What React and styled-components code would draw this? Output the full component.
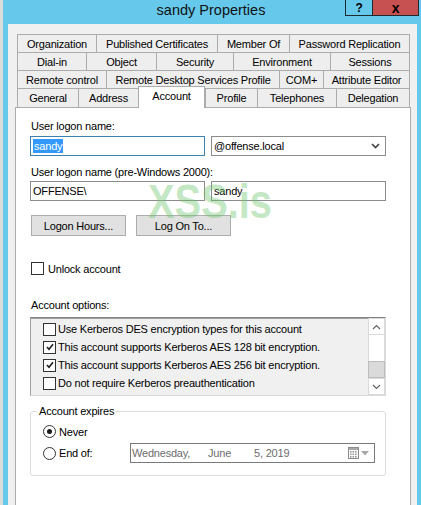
import React from 'react';
import styled, { createGlobalStyle } from 'styled-components';

const GlobalStyle = createGlobalStyle`
  html, body {
    margin: 0;
    padding: 0;
  }
  body {
    background: #dcdcdc;
    font-family: "Liberation Sans", Arial, sans-serif;
    font-size: 11px;
    letter-spacing: -0.2px;
    color: #000;
    overflow: hidden;
  }
`

const Window = styled.div`
  margin-left: 3px;
  width: 418px;
  height: 505px;
  background: #66c9ec;
  display: flex;
  flex-direction: column;
  overflow: hidden;
`
const TitleBar = styled.div`
  flex: none;
  height: 24px;
  display: grid;
  grid-template-columns: 1fr auto 1fr;
  padding-right: 2px;
`
const Title = styled.div`
  grid-column: 2;
  font-size: 14.5px;
  letter-spacing: 0;
  line-height: 20px;
  color: #111;
`
const Caption = styled.div`
  grid-column: 3;
  justify-self: end;
  align-self: start;
  display: flex;
`
const CaptionButton = styled.div`
  width: ${p => p.$w}px;
  height: 16px;
  box-sizing: border-box;
  background: ${p => p.$bg};
  border: 1px solid #1f2a30;
  border-top: none;
  ${p => p.$noLeft && 'border-left: none;'}
  display: flex;
  align-items: center;
  justify-content: center;
  font-weight: bold;
  font-size: ${p => p.$fs || 12}px;
  line-height: 14px;
  color: #000;
`
const Body = styled.div`
  flex: 1;
  margin: 0 4px 0 5px;
  background: #f0f0f0;
  padding: 10px 6px 0 7px;
  display: flex;
  flex-direction: column;
  min-height: 0;
`
const TabStrip = styled.div`
  margin-left: 2px;
  width: 393px;
  display: flex;
  flex-direction: column;
`
const TabRow = styled.div`
  display: flex;
  height: ${p => p.$h}px;
`
const Tab = styled.div`
  flex: none;
  width: ${p => p.$w}px;
  box-sizing: border-box;
  border-top: 1px solid #acacac;
  border-left: 1px solid #acacac;
  background: #eeeeee;
  display: flex;
  align-items: center;
  justify-content: center;
  white-space: nowrap;
  &:last-child {
    border-right: 1px solid #acacac;
  }
  ${p => p.$active && `
    position: relative;
    z-index: 1;
    align-self: flex-start;
    height: 22px;
    margin-top: -2px;
    background: #fff;
    border-right: 1px solid #acacac;
    padding-bottom: 3px;
  `}
`
const Panel = styled.div`
  flex: 1;
  position: relative;
  background: #fff;
  border: 1px solid #acacac;
  border-bottom: none;
  padding: 11px 0 0 14px;
  display: flex;
  flex-direction: column;
  align-items: flex-start;
`
const Label = styled.div`
  height: 15px;
  line-height: 15px;
  margin-left: 1px;
  margin-top: ${p => p.$mt || 0}px;
  margin-bottom: ${p => p.$mb || 0}px;
  white-space: nowrap;
`
const FieldRow = styled.div`
  display: flex;
  gap: 6px;
`
const TextBox = styled.div`
  width: 175px;
  height: 20px;
  box-sizing: border-box;
  border: 1px solid ${p => (p.$focused ? '#3c7fb1' : '#8c8c8c')};
  background: #fff;
  display: flex;
  align-items: center;
  justify-content: space-between;
  padding: 0 5px 0 2px;
  white-space: nowrap;
`
const Selected = styled.span`
  background: #3399ff;
  color: #fff;
  line-height: 14px;
  padding: 0 1px;
`
const ButtonRow = styled.div`
  display: flex;
  gap: 10px;
  margin-top: 14px;
  margin-left: 1px;
`
const Button = styled.div`
  width: 95px;
  height: 21px;
  box-sizing: border-box;
  background: #e1e1e1;
  border: 1px solid #adadad;
  display: flex;
  align-items: center;
  justify-content: center;
`
const CheckRow = styled.div`
  display: flex;
  align-items: center;
  gap: ${p => p.$gap || 3}px;
  height: ${p => p.$h || 15}px;
  margin-top: ${p => p.$mt || 0}px;
  padding-left: ${p => p.$pl || 0}px;
  white-space: nowrap;
`
const Box = styled.span`
  flex: none;
  width: 13px;
  height: 13px;
  box-sizing: border-box;
  border: 1px solid #333;
  background: #fff;
  display: flex;
  align-items: center;
  justify-content: center;
`
const Radio = styled(Box)`
  border-radius: 50%;
  &::after {
    content: '';
    display: ${p => (p.$on ? 'block' : 'none')};
    width: 5px;
    height: 5px;
    border-radius: 50%;
    background: #1b1b1b;
  }
`
const ListBox = styled.div`
  margin-top: 4px;
  width: 356px;
  height: 79px;
  box-sizing: border-box;
  border: 1px solid #dadada;
  border-top-color: #828282;
  border-left-color: #a0a0a0;
  box-shadow: inset 0 1px 0 #a0a0a0;
  background: #f0f0f0;
  display: flex;
`
const Items = styled.div`
  flex: 1;
  padding: 2px 0 0 12px;
`
const ScrollBar = styled.div`
  flex: none;
  width: 17px;
  display: flex;
  flex-direction: column;
  background: #fff;
`
const ScrollButton = styled.div`
  height: 17px;
  box-sizing: border-box;
  border: 1px solid #dadada;
  background: #fff;
  display: flex;
  align-items: center;
  justify-content: center;
`
const Track = styled.div`
  flex: 1;
  border-left: 1px solid #dadada;
  border-right: 1px solid #dadada;
`
const Thumb = styled.div`
  height: 17px;
  box-sizing: border-box;
  background: #dadada;
  border: 1px solid #bdbdbd;
`
const Group = styled.fieldset`
  margin: 8px 0 0;
  padding: 5px 0 12px;
  width: 356px;
  box-sizing: border-box;
  border: 1px solid #dcdcdc;
  border-radius: 3px;
  min-width: 0;
`
const Legend = styled.legend`
  margin-left: 6px;
  padding: 0 2px;
  line-height: 15px;
`
const EndLabel = styled.span`
  width: 68px;
`
const DateBox = styled.div`
  width: 245px;
  height: 20px;
  box-sizing: border-box;
  border: 1px solid #7a7a7a;
  background: #fff;
  color: #6d6d6d;
  display: flex;
  align-items: center;
  padding: 0 5px 0 1px;
`
const DatePart = styled.span`
  width: ${p => p.$w}px;
`
const DateIcons = styled.span`
  margin-left: auto;
  display: flex;
  align-items: center;
  gap: 2px;
`
const Watermark = styled.div`
  position: absolute;
  left: 132px;
  top: 70px;
  font-size: 48px;
  line-height: 1;
  font-weight: bold;
  letter-spacing: 0;
  color: rgba(110, 196, 110, 0.42);
  transform: scaleX(0.83);
  transform-origin: left top;
  pointer-events: none;
`

const Check = () => (
  <svg width="8" height="8" viewBox="0 0 8 8">
    <path d="M1 4 L3 6.3 L7 1.2" fill="none" stroke="#1e1e1e" strokeWidth="1.6" />
  </svg>
)

const Chevron = ({ up, color = '#606060', w = 1.1 }) => (
  <svg width="9" height="6" viewBox="0 0 9 6">
    <polyline
      points={up ? '1,5 4.5,1.5 8,5' : '1,1 4.5,4.5 8,1'}
      fill="none"
      stroke={color}
      strokeWidth={w}
    />
  </svg>
)

const CalendarIcon = () => (
  <svg width="11" height="12" viewBox="0 0 11 12">
    <rect x="0.5" y="0.5" width="10" height="11" fill="#fff" stroke="#8a8a8a" />
    <rect x="1" y="1" width="9" height="2" fill="#a8a8a8" />
    {[4, 6.5, 9].map(y =>
      [2, 4.5, 7].map(x => (
        <rect key={`${x}-${y}`} x={x} y={y} width="1.6" height="1.6" fill="#9a9a9a" />
      ))
    )}
  </svg>
)

const tabRows = [
  { h: 18, tabs: [['Organization', 79], ['Published Certificates', 121], ['Member Of', 72], ['Password Replication', 121]] },
  { h: 18, tabs: [['Dial-in', 69], ['Object', 70], ['Security', 77], ['Environment', 97], ['Sessions', 80]] },
  { h: 18, tabs: [['Remote control', 89], ['Remote Desktop Services Profile', 173], ['COM+', 44], ['Attribute Editor', 87]] },
  { h: 19, tabs: [['General', 61], ['Address', 60], ['Account', 67], ['Profile', 52], ['Telephones', 79], ['Delegation', 74]] },
]

const options = [
  ['Use Kerberos DES encryption types for this account', false],
  ['This account supports Kerberos AES 128 bit encryption.', true],
  ['This account supports Kerberos AES 256 bit encryption.', true],
  ['Do not require Kerberos preauthentication', false],
]

export default function App() {
  return (
    <>
      <GlobalStyle />
      <Window>
        <TitleBar>
          <Title>sandy Properties</Title>
          <Caption>
            <CaptionButton $w={28} $bg="transparent">?</CaptionButton>
            <CaptionButton $w={46} $bg="#c75050" $fs={14} $noLeft>x</CaptionButton>
          </Caption>
        </TitleBar>
        <Body>
          <TabStrip>
            {tabRows.map((row, i) => (
              <TabRow key={i} $h={row.h}>
                {row.tabs.map(([name, w]) => (
                  <Tab key={name} $w={w} $active={name === 'Account'}>{name}</Tab>
                ))}
              </TabRow>
            ))}
          </TabStrip>
          <Panel>
            <Label $mb={2}>User logon name:</Label>
            <FieldRow>
              <TextBox $focused><Selected>sandy</Selected></TextBox>
              <TextBox>
                <span>@offense.local</span>
                <Chevron color="#444" w={1.7} />
              </TextBox>
            </FieldRow>
            <Label $mt={9} $mb={1}>User logon name (pre-Windows 2000):</Label>
            <FieldRow>
              <TextBox>OFFENSE\</TextBox>
              <TextBox>sandy</TextBox>
            </FieldRow>
            <ButtonRow>
              <Button>Logon Hours...</Button>
              <Button>Log On To...</Button>
            </ButtonRow>
            <CheckRow $mt={25} $gap={4} $pl={1}>
              <Box />
              <span>Unlock account</span>
            </CheckRow>
            <Label $mt={22}>Account options:</Label>
            <ListBox>
              <Items>
                {options.map(([text, on]) => (
                  <CheckRow key={text} $h={18} $gap={2}>
                    <Box>{on && <Check />}</Box>
                    <span>{text}</span>
                  </CheckRow>
                ))}
              </Items>
              <ScrollBar>
                <ScrollButton><Chevron up /></ScrollButton>
                <Track />
                <Thumb />
                <ScrollButton><Chevron /></ScrollButton>
              </ScrollBar>
            </ListBox>
            <Group>
              <Legend>Account expires</Legend>
              <CheckRow $pl={12}>
                <Radio $on />
                <span>Never</span>
              </CheckRow>
              <CheckRow $pl={12} $h={20} $mt={4}>
                <Radio />
                <EndLabel>End of:</EndLabel>
                <DateBox>
                  <DatePart $w={76}>Wednesday,</DatePart>
                  <DatePart $w={46}>June</DatePart>
                  <DatePart>5, 2019</DatePart>
                  <DateIcons>
                    <CalendarIcon />
                    <svg width="8" height="5" viewBox="0 0 8 5">
                      <polygon points="0,0 8,0 4,4.5" fill="#a8a8a8" />
                    </svg>
                  </DateIcons>
                </DateBox>
              </CheckRow>
            </Group>
            <Watermark>XSS.is</Watermark>
          </Panel>
        </Body>
      </Window>
    </>
  )
}
